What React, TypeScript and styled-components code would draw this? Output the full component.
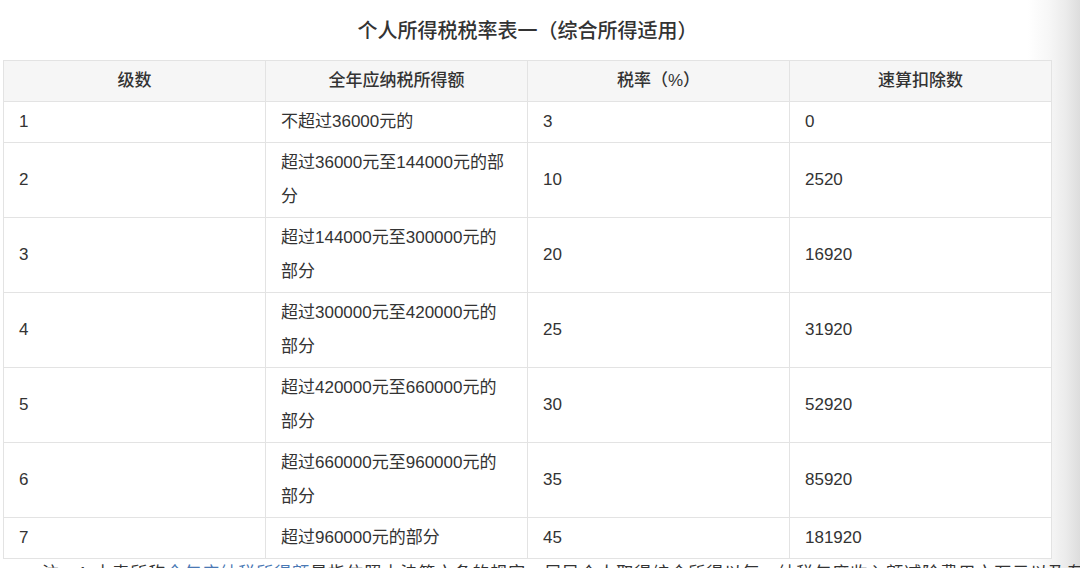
import React from "react";
import styled, { createGlobalStyle } from "styled-components";

const GlobalStyle = createGlobalStyle`
  html, body {
    margin: 0;
    padding: 0;
    height: 100%;
    overflow: hidden;
  }
  body {
    background: linear-gradient(
      to right,
      #ffffff 0,
      #ffffff 1028px,
      #f6f6f6 1050px,
      #ebebeb 1066px,
      #dddddd 1080px
    );
    font-family: "Liberation Sans", "Noto Sans CJK SC", sans-serif;
    color: #333333;
  }
`;

const Page = styled.div`
  width: 1049px;
  padding: 0 28px 0 3px;
`;

const Title = styled.h2`
  margin: 0;
  padding-top: 18px;
  height: 42px;
  box-sizing: border-box;
  font-size: 20px;
  line-height: 26px;
  font-weight: 500;
  text-align: center;
  color: #333333;
`;

const Table = styled.table`
  width: 1049px;
  table-layout: fixed;
  border-collapse: collapse;
  margin-top: 18px;
  font-size: 17px;
`;

const HeadCell = styled.th`
  background: #f6f6f6;
  border: 1px solid #e3e3e3;
  padding: 3px 15px;
  line-height: 34px;
  font-weight: 500;
  text-align: center;
  color: #333333;
`;

const Cell = styled.td`
  background: #ffffff;
  border: 1px solid #e3e3e3;
  padding: 3px 15px;
  line-height: 34px;
  text-align: left;
  vertical-align: middle;
  color: #333333;
`;

const Note = styled.p`
  margin: 0;
  padding-top: 2px;
  padding-left: 39px;
  font-size: 17px;
  line-height: 26px;
  white-space: nowrap;
  letter-spacing: 1px;
`;

const Link = styled.span`
  color: #4a78b4;
`;

type Row = { level: string; range: React.ReactNode; rate: string; deduct: string };

const rows: Row[] = [
  { level: "1", range: "不超过36000元的", rate: "3", deduct: "0" },
  { level: "2", range: <>超过36000元至144000元的部<br />分</>, rate: "10", deduct: "2520" },
  { level: "3", range: <>超过144000元至300000元的<br />部分</>, rate: "20", deduct: "16920" },
  { level: "4", range: <>超过300000元至420000元的<br />部分</>, rate: "25", deduct: "31920" },
  { level: "5", range: <>超过420000元至660000元的<br />部分</>, rate: "30", deduct: "52920" },
  { level: "6", range: <>超过660000元至960000元的<br />部分</>, rate: "35", deduct: "85920" },
  { level: "7", range: "超过960000元的部分", rate: "45", deduct: "181920" },
];

export default function App() {
  return (
    <>
      <GlobalStyle />
      <Page>
        <Title>个人所得税税率表一（综合所得适用）</Title>
        <Table>
          <thead>
            <tr>
              <HeadCell>级数</HeadCell>
              <HeadCell>全年应纳税所得额</HeadCell>
              <HeadCell>税率（%）</HeadCell>
              <HeadCell>速算扣除数</HeadCell>
            </tr>
          </thead>
          <tbody>
            {rows.map((r) => (
              <tr key={r.level}>
                <Cell>{r.level}</Cell>
                <Cell>{r.range}</Cell>
                <Cell>{r.rate}</Cell>
                <Cell>{r.deduct}</Cell>
              </tr>
            ))}
          </tbody>
        </Table>
        <Note>
          注：1.本表所称<Link>全年应纳税所得额</Link>是指依照本法第六条的规定，居民个人取得综合所得以每一纳税年度收入额减除费用六万元以及专项扣除、专项附加扣除和依法确定的其他扣除后的余额。
        </Note>
      </Page>
    </>
  );
}
